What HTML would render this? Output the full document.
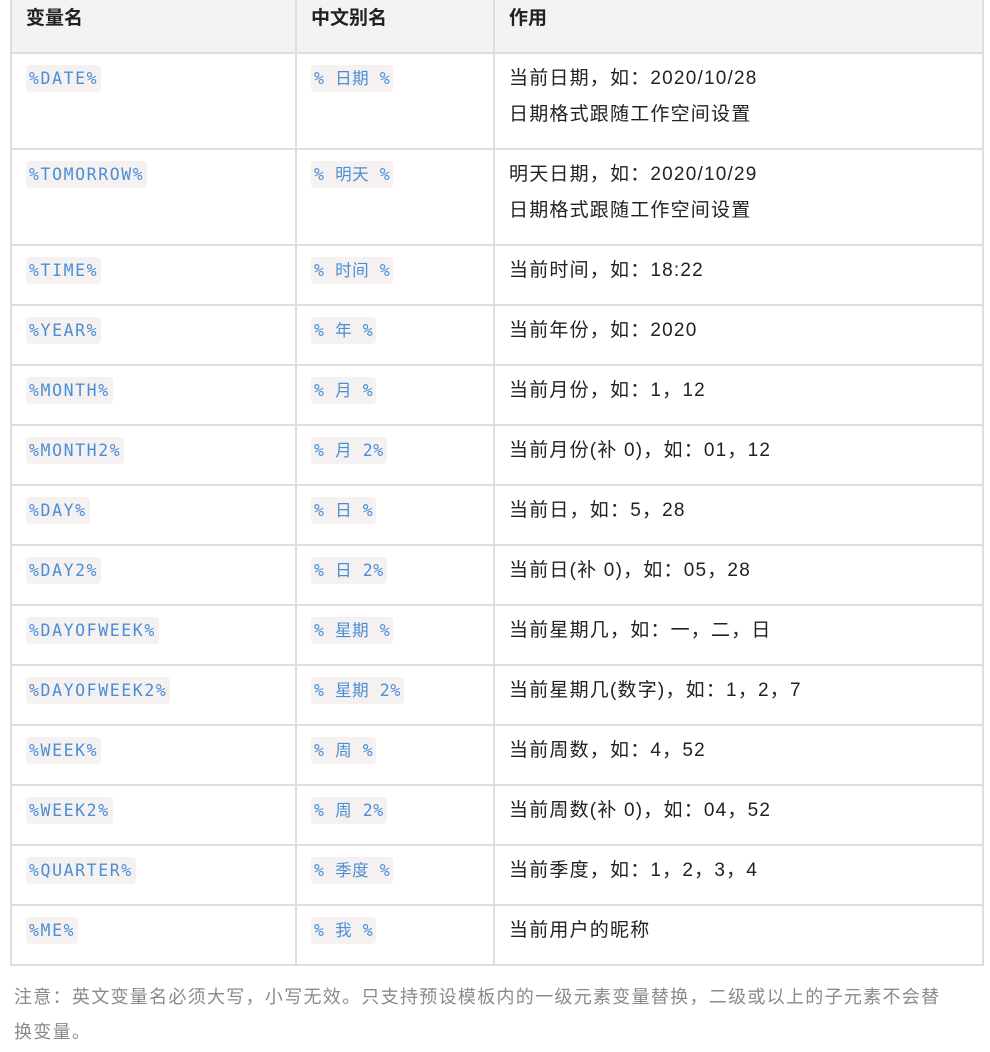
<!DOCTYPE html>
<html><head><meta charset="utf-8"><style>
body{margin:0;background:#fff;width:990px;height:1052px;overflow:hidden;font-family:"Liberation Sans","Noto Sans CJK SC",sans-serif;color:#222;}
table{position:absolute;left:10px;top:-10px;width:974px;border-collapse:collapse;}
td,th{border:2px solid #dedede;text-align:left;vertical-align:top;font-size:19px;line-height:36px;padding:7px 14px 14px 14px;letter-spacing:1.2px;height:37px;box-sizing:content-box}
th{background:#f3f3f3;font-weight:bold;padding:9px 14px 15px 14px;height:28px;letter-spacing:0}
tr.two td{height:73px}
td:nth-child(1),th:nth-child(1){width:255px}
td:nth-child(2),th:nth-child(2){width:168px}
code{font-family:"DejaVu Sans Mono","Noto Sans CJK SC",monospace;font-size:16.5px;color:#4a8fd6;background:#f5f1f1;border-radius:4px;padding:4px 3px;letter-spacing:1.6px;line-height:20px}
code.c{letter-spacing:0.6px}
.note{position:absolute;left:14px;top:980px;width:940px;font-size:18px;line-height:35px;color:#8a8a8a;letter-spacing:1.3px}
</style></head><body>
<table>
<tr><th>变量名</th><th>中文别名</th><th>作用</th></tr>
<tr class="two"><td><code>%DATE%</code></td><td><code class="c">%&thinsp;日期&thinsp;%</code></td><td>当前日期，如：2020/10/28<br>日期格式跟随工作空间设置</td></tr>
<tr class="two"><td><code>%TOMORROW%</code></td><td><code class="c">%&thinsp;明天&thinsp;%</code></td><td>明天日期，如：2020/10/29<br>日期格式跟随工作空间设置</td></tr>
<tr><td><code>%TIME%</code></td><td><code class="c">%&thinsp;时间&thinsp;%</code></td><td>当前时间，如：18:22</td></tr>
<tr><td><code>%YEAR%</code></td><td><code class="c">%&thinsp;年&thinsp;%</code></td><td>当前年份，如：2020</td></tr>
<tr><td><code>%MONTH%</code></td><td><code class="c">%&thinsp;月&thinsp;%</code></td><td>当前月份，如：1，12</td></tr>
<tr><td><code>%MONTH2%</code></td><td><code class="c">%&thinsp;月&thinsp;2%</code></td><td>当前月份(补 0)，如：01，12</td></tr>
<tr><td><code>%DAY%</code></td><td><code class="c">%&thinsp;日&thinsp;%</code></td><td>当前日，如：5，28</td></tr>
<tr><td><code>%DAY2%</code></td><td><code class="c">%&thinsp;日&thinsp;2%</code></td><td>当前日(补 0)，如：05，28</td></tr>
<tr><td><code>%DAYOFWEEK%</code></td><td><code class="c">%&thinsp;星期&thinsp;%</code></td><td>当前星期几，如：一，二，日</td></tr>
<tr><td><code>%DAYOFWEEK2%</code></td><td><code class="c">%&thinsp;星期&thinsp;2%</code></td><td>当前星期几(数字)，如：1，2，7</td></tr>
<tr><td><code>%WEEK%</code></td><td><code class="c">%&thinsp;周&thinsp;%</code></td><td>当前周数，如：4，52</td></tr>
<tr><td><code>%WEEK2%</code></td><td><code class="c">%&thinsp;周&thinsp;2%</code></td><td>当前周数(补 0)，如：04，52</td></tr>
<tr><td><code>%QUARTER%</code></td><td><code class="c">%&thinsp;季度&thinsp;%</code></td><td>当前季度，如：1，2，3，4</td></tr>
<tr><td><code>%ME%</code></td><td><code class="c">%&thinsp;我&thinsp;%</code></td><td>当前用户的昵称</td></tr>
</table>
<div class="note">注意：英文变量名必须大写，小写无效。只支持预设模板内的一级元素变量替换，二级或以上的子元素不会替换变量。</div>
</body></html>
